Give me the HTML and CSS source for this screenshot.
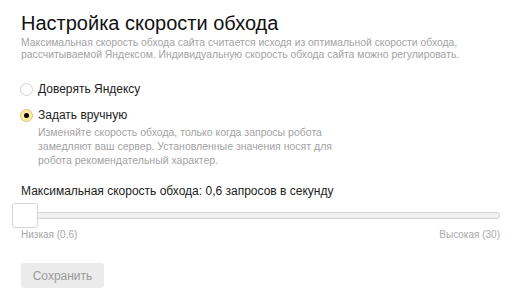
FILE: index.html
```html
<!DOCTYPE html>
<html lang="ru">
<head>
<meta charset="utf-8">
<link rel="stylesheet" href="styles.css">
</head>
<body>
<div class="page">
  <h1 class="title">Настройка скорости обхода</h1>
  <p class="desc">Максимальная скорость обхода сайта считается исходя из оптимальной скорости обхода,<br>рассчитываемой Яндексом. Индивидуальную скорость обхода сайта можно регулировать.</p>

  <div class="radios">
    <label class="radio">
      <span class="radio-box"></span>
      <span class="radio-text">Доверять Яндексу</span>
    </label>
    <label class="radio radio-checked">
      <span class="radio-box"><span class="radio-dot"></span></span>
      <span class="radio-text">Задать вручную</span>
    </label>
    <p class="radio-hint">Изменяйте скорость обхода, только когда запросы робота<br>замедляют ваш сервер. Установленные значения носят для<br>робота рекомендательный характер.</p>
  </div>

  <div class="speed-label">Максимальная скорость обхода: 0,6 запросов в секунду</div>
  <div class="slider">
    <div class="slider-track"></div>
    <div class="slider-thumb"></div>
  </div>
  <div class="slider-legend">
    <span>Низкая (0,6)</span>
    <span>Высокая (30)</span>
  </div>

  <button class="save" type="button">Сохранить</button>
</div>
</body>
</html>
```

FILE: styles.css
```css
html, body {
  margin: 0;
  padding: 0;
  background: #fff;
}
body {
  font-family: "Liberation Sans", Arial, sans-serif;
  color: #000;
}
.page {
  padding: 12px 19px 0 21px;
  width: 479px;
}
.title {
  margin: 0;
  font-size: 20px;
  font-weight: normal;
  line-height: 22px;
  color: #111;
}
.desc {
  margin: 3px 0 0;
  font-size: 10.4px;
  line-height: 12px;
  color: #a3a3a3;
}
.radios {
  margin-top: 22px;
}
.radio {
  display: flex;
  align-items: center;
  gap: 5px;
  height: 13px;
  margin-left: -1px;
}
.radio + .radio {
  margin-top: 13px;
}
.radio-box {
  box-sizing: border-box;
  width: 13px;
  height: 13px;
  border-radius: 50%;
  border: 1px solid #cfcfcf;
  background: #fff;
  display: flex;
  align-items: center;
  justify-content: center;
}
.radio-checked .radio-box {
  background: #ffeba0;
  border-color: #d9c27a;
}
.radio-dot {
  width: 5px;
  height: 5px;
  border-radius: 50%;
  background: #000;
}
.radio-text {
  font-size: 12px;
  line-height: 13px;
  color: #222;
}
.radio-hint {
  margin: 3px 0 0 17px;
  font-size: 10.5px;
  line-height: 14px;
  color: #a3a3a3;
}
.speed-label {
  margin-top: 17px;
  font-size: 12px;
  line-height: 14px;
  color: #222;
}
.slider {
  position: relative;
  height: 25px;
  margin-top: 5px;
  margin-left: -9px;
  width: 488px;
  display: flex;
  align-items: center;
}
.slider-track {
  box-sizing: border-box;
  margin-left: 12px;
  flex: 1;
  height: 7px;
  border: 1px solid #d2d2d2;
  border-radius: 3px;
  background: #f1f1f1;
}
.slider-thumb {
  position: absolute;
  left: 0;
  top: 0;
  box-sizing: border-box;
  width: 26px;
  height: 25px;
  border: 1px solid #d4d4d4;
  border-radius: 3px;
  background: #fff;
}
.slider-legend {
  display: flex;
  justify-content: space-between;
  margin-top: 1px;
  font-size: 10px;
  line-height: 12px;
  color: #a8a8a8;
}
.save {
  margin-top: 22px;
  width: 83px;
  height: 25px;
  border: none;
  border-radius: 3px;
  background: #ebebeb;
  color: #9a9a9a;
  font-family: "Liberation Sans", Arial, sans-serif;
  font-size: 12px;
  padding: 0;
}
```
